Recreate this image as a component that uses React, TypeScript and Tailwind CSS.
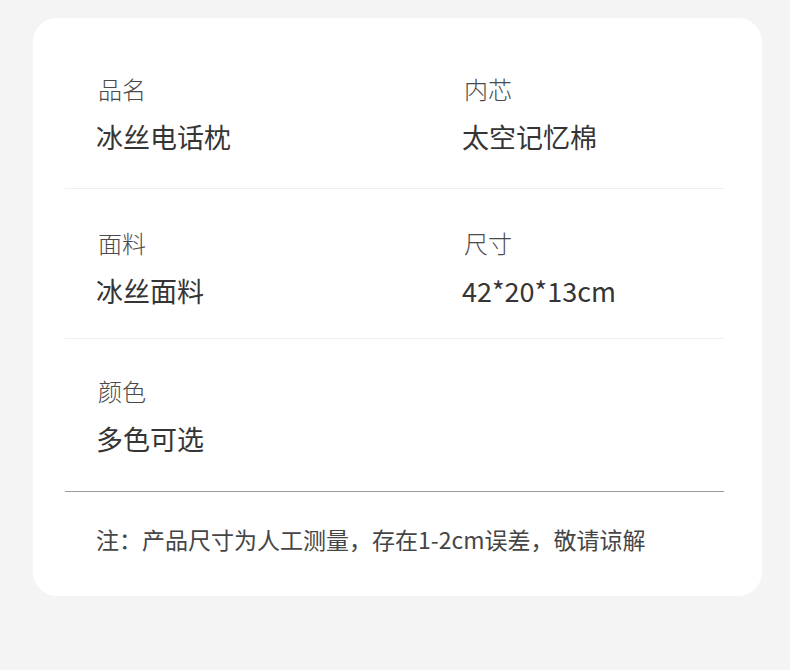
import React from 'react';

const font = { fontFamily: '"Noto Sans CJK SC", "Noto Sans", sans-serif' };

type Spec = { label: string; value: string };

const Cell: React.FC<Spec> = ({ label, value }) => (
  <div className="flex flex-col">
    <div className="text-[24px] leading-[30px] font-light text-[#4a4a4a] pl-[2px]">{label}</div>
    <div className="text-[27px] leading-[36px] text-[#353535] mt-[15px]">{value}</div>
  </div>
);

const rows: { items: Spec[]; className: string }[] = [
  {
    items: [
      { label: '品名', value: '冰丝电话枕' },
      { label: '内芯', value: '太空记忆棉' },
    ],
    className: 'pt-[56px] pb-[33px] border-b border-[#efefef]',
  },
  {
    items: [
      { label: '面料', value: '冰丝面料' },
      { label: '尺寸', value: '42*20*13cm' },
    ],
    className: 'pt-[39px] pb-[29px] border-b border-[#efefef]',
  },
  {
    items: [{ label: '颜色', value: '多色可选' }],
    className: 'pt-[37px] pb-[34px] border-b border-[#9a9a9a]',
  },
];

export default function App() {
  return (
    <div className="min-h-[670px] bg-[#f4f4f4] pt-[18px] pl-[33px] pr-[28px]" style={font}>
      <div className="w-[729px] h-[578px] bg-white rounded-[24px] pl-[32px] pr-[38px]">
        {rows.map((row, i) => (
          <div key={i} className={`grid grid-cols-[366px_1fr] pl-[31px] ${row.className}`}>
            {row.items.map((it) => (
              <Cell key={it.label} {...it} />
            ))}
          </div>
        ))}
        <div className="pl-[31px] pt-[32px] text-[23px] leading-[30px] text-[#454545]">
          注：产品尺寸为人工测量，存在1-2cm误差，敬请谅解
        </div>
      </div>
    </div>
  );
}
